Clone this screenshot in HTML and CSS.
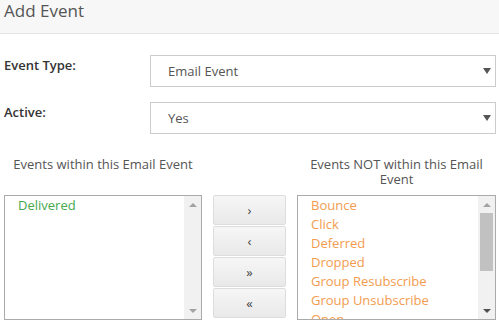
FILE: index.html
```html
<!DOCTYPE html>
<html lang="en">
<head>
  <meta charset="UTF-8">
  <meta name="viewport" content="width=device-width, initial-scale=1.0">
  <title>Add Event</title>
  <link rel="stylesheet" href="styles.css">
</head>
<body>
  <!-- Header -->
  <div class="header">
    <h1>Add Event</h1>
  </div>

  <div class="form">
    <div class="form-row">
      <label for="eventType">Event Type:</label>
      <div class="select-wrap">
        <select id="eventType">
          <option>Email Event</option>
        </select>
      </div>
    </div>

    <div class="form-row">
      <label for="active">Active:</label>
      <div class="select-wrap">
        <select id="active">
          <option>Yes</option>
        </select>
      </div>
    </div>

    <!-- Event lists -->
    <div class="picker">
      <div class="picker-title">Events within this Email Event</div>
      <div></div>
      <div class="picker-title">Events NOT within this Email Event</div>

      <div class="listbox">
        <ul class="list-items">
          <li class="included">Delivered</li>
        </ul>
        <div class="scrollbar disabled">
          <span class="arrow up"></span>
          <div class="track"></div>
          <span class="arrow down"></span>
        </div>
      </div>

      <div class="move-buttons">
        <button>&rsaquo;</button>
        <button>&lsaquo;</button>
        <button>&raquo;</button>
        <button>&laquo;</button>
      </div>

      <div class="listbox">
        <ul class="list-items">
          <li class="excluded">Bounce</li>
          <li class="excluded">Click</li>
          <li class="excluded">Deferred</li>
          <li class="excluded">Dropped</li>
          <li class="excluded">Group Resubscribe</li>
          <li class="excluded">Group Unsubscribe</li>
          <li class="excluded">Open</li>
        </ul>
        <div class="scrollbar">
          <span class="arrow up"></span>
          <div class="track"><div class="thumb"></div></div>
          <span class="arrow down"></span>
        </div>
      </div>
    </div>
  </div>
</body>
</html>
```

FILE: styles.css
```css
* {
  box-sizing: border-box;
  margin: 0;
  padding: 0;
}

body {
  font-family: "Open Sans", Arial, sans-serif;
  font-size: 13px;
  color: #555;
  background: #fff;
}

.header {
  height: 34px;
  background: #f7f7f7;
  border-bottom: 1px solid #e5e5e5;
  padding: 0 4px;
}

.header h1 {
  font-size: 17px;
  font-weight: 400;
  line-height: 21px;
  color: #555;
}

.form {
  padding: 21px 3px 0 4px;
}

.form-row {
  display: flex;
  align-items: flex-start;
  margin-bottom: 15px;
}

.form-row label {
  flex: 0 0 146px;
  font-weight: 600;
  color: #333;
  line-height: 19px;
  padding-top: 1px;
}

.select-wrap {
  flex: 1;
  position: relative;
}

.select-wrap select {
  display: block;
  width: 100%;
  height: 32px;
  appearance: none;
  -webkit-appearance: none;
  border: 1px solid #ccc;
  border-radius: 0;
  background: #fff;
  font-family: inherit;
  font-size: 13px;
  color: #555;
  padding: 0 0 0 17px;
}

.select-wrap::after {
  content: "";
  position: absolute;
  right: 5px;
  top: 13px;
  border-left: 4px solid transparent;
  border-right: 4px solid transparent;
  border-top: 6px solid #555;
}

.picker {
  display: grid;
  grid-template-columns: 198px 73px 199px;
  column-gap: 11px;
  row-gap: 8px;
  margin-top: 23px;
}

.picker-title {
  text-align: center;
  line-height: 15px;
  color: #555;
}

.listbox {
  display: flex;
  height: 125px;
  border: 1px solid #aaa;
  overflow: hidden;
}

.list-items {
  flex: 1;
  list-style: none;
  padding-left: 13px;
  line-height: 19px;
  overflow: hidden;
}

.list-items .included {
  color: #45a84f;
}

.list-items .excluded {
  color: #f39c4f;
}

.scrollbar {
  flex: 0 0 17px;
  display: flex;
  flex-direction: column;
  background: #f1f1f1;
}

.arrow {
  flex: 0 0 17px;
  display: flex;
  justify-content: center;
  align-items: center;
}

.arrow::before {
  content: "";
  border-left: 4px solid transparent;
  border-right: 4px solid transparent;
}

.arrow.up::before {
  border-bottom: 4px solid #a3a3a3;
}

.arrow.down::before {
  border-top: 4px solid #505050;
}

.scrollbar.disabled .arrow.down::before {
  border-top-color: #a3a3a3;
}

.track {
  flex: 1;
  padding: 0 2px;
}

.thumb {
  height: 58px;
  background: #c1c1c1;
}

.move-buttons {
  display: flex;
  flex-direction: column;
  gap: 1px;
}

.move-buttons button {
  height: 30px;
  border: 1px solid #ddd;
  border-radius: 2px;
  background: linear-gradient(#f6f6f6, #e9e9e9);
  font-family: inherit;
  font-size: 13px;
  color: #444;
  cursor: pointer;
}
```
